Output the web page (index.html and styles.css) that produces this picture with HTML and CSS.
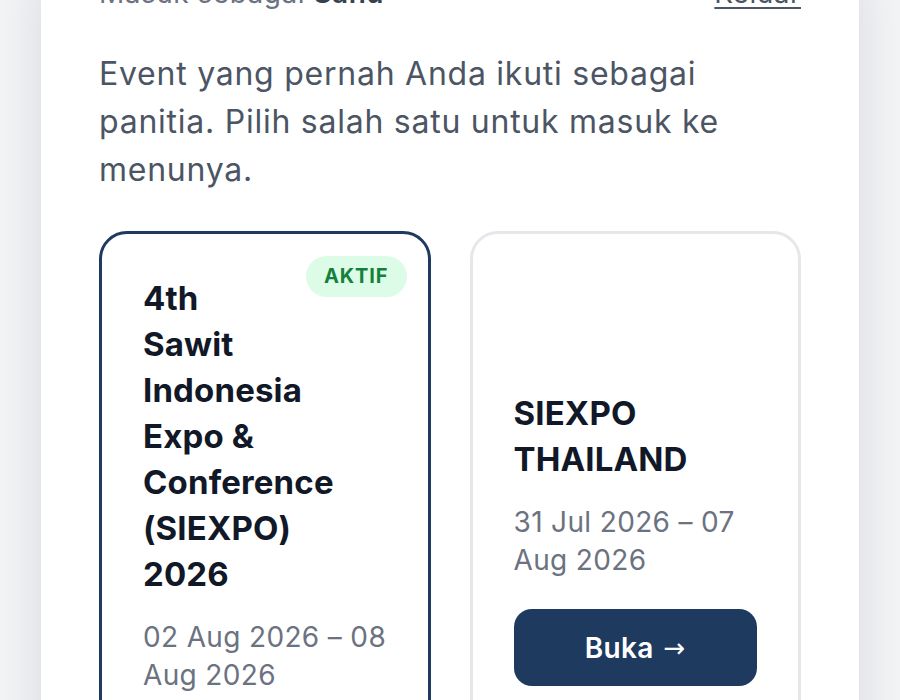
FILE: index.html
```html
<!DOCTYPE html>
<html lang="id">
<head>
<meta charset="utf-8">
<title>Pilih Event</title>
<link rel="stylesheet" href="styles.css">
</head>
<body>
<div class="page">
  <main class="sheet">
    <div class="topbar">
      <span class="who">Masuk sebagai <strong>Sahu</strong></span>
      <a class="logout" href="#">Keluar</a>
    </div>
    <p class="intro">Event yang pernah Anda ikuti sebagai panitia. Pilih salah satu untuk masuk ke menunya.</p>
    <div class="events">
      <section class="event event-active">
        <span class="badge">AKTIF</span>
        <h2 class="event-title event-title-narrow">4th Sawit Indonesia Expo &amp; Conference (SIEXPO) 2026</h2>
        <p class="event-date">02 Aug 2026 – 08 Aug 2026</p>
        <a class="open-btn" href="#">Buka <span class="arrow">→</span></a>
      </section>
      <section class="event">
        <h2 class="event-title">SIEXPO THAILAND</h2>
        <p class="event-date">31 Jul 2026 – 07 Aug 2026</p>
        <a class="open-btn" href="#">Buka <span class="arrow">→</span></a>
      </section>
    </div>
  </main>
</div>
</body>
</html>
```
FILE: styles.css
```css
* { box-sizing: border-box; }
html, body { margin: 0; padding: 0; }
body {
  background: #f3f4f6;
  font-family: Inter, "Noto Sans", "Liberation Sans", sans-serif;
  overflow: hidden;
  height: 700px;
}
.page {
  padding: 0 41px;
}
.sheet {
  background: #ffffff;
  margin-top: -25px;
  padding: 0 58px 40px;
  box-shadow: 0 0 48px rgba(17, 24, 39, 0.12);
  min-height: 900px;
}
.topbar {
  display: flex;
  justify-content: space-between;
  align-items: baseline;
  font-size: 28px;
  line-height: 36px;
  color: #6b7280;
  letter-spacing: 0.5px;
}
.who strong {
  color: #374151;
  font-weight: 600;
}
.logout {
  color: #4b5563;
  text-decoration: underline;
  text-decoration-thickness: 2px;
  text-underline-offset: 4px;
}
.intro {
  margin: 39px 0 0;
  font-size: 32px;
  line-height: 48px;
  letter-spacing: 0.75px;
  color: #4b5563;
}
.events {
  margin-top: 37px;
  display: grid;
  grid-template-columns: 1fr 1fr;
  gap: 39px;
}
.event {
  position: relative;
  border: 3px solid #e5e7eb;
  border-radius: 28px;
  padding: 41px 41px 40px;
  display: flex;
  flex-direction: column;
  justify-content: center;
}
.event-active {
  border-color: #1e3a5f;
  justify-content: flex-start;
}
.badge {
  position: absolute;
  top: 22px;
  right: 21px;
  height: 41px;
  padding: 0 18px;
  border-radius: 999px;
  background: #dcfce7;
  color: #15803d;
  font-size: 20px;
  font-weight: 700;
  line-height: 41px;
  letter-spacing: 0.9px;
}
.event-title {
  margin: 0;
  font-size: 33px;
  line-height: 46px;
  font-weight: 700;
  letter-spacing: 0.15px;
  color: #111827;
}
.event-title-narrow {
  max-width: 150px;
}
.event-date {
  margin: 21px 0 0;
  font-size: 28px;
  line-height: 38px;
  letter-spacing: 0.35px;
  color: #6b7280;
}
.open-btn {
  margin-top: 30px;
  display: flex;
  align-items: center;
  justify-content: center;
  gap: 10px;
  height: 77px;
  border-radius: 18px;
  background: #1e3a5f;
  color: #ffffff;
  font-size: 28px;
  font-weight: 600;
  letter-spacing: 0.3px;
  text-decoration: none;
}
.arrow {
  font-family: "DejaVu Sans", sans-serif;
  font-weight: 400;
  font-size: 26px;
}
```
